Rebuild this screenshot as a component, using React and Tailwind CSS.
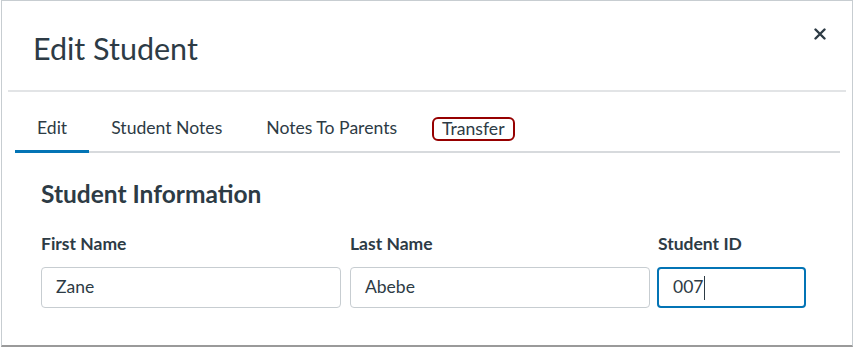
export default function App() {
  const tabs = ['Edit', 'Student Notes', 'Notes To Parents', 'Transfer'];
  return (
    <div className="w-[854px] h-[349px] bg-white" style={{ fontFamily: 'Lato, "Noto Sans", sans-serif' }}>
      <div className="ml-[1px] w-[852px] h-[347px] border border-[#c7cdd1] border-b-2 border-b-[#9a9a9a] bg-white text-[#2d3b45]">
        {/* Header */}
        <div className="relative h-[91px] mx-[6px] border-b-2 border-[#e2e4e6]">
          <h1 className="pt-[28px] pl-[25px] text-[30.5px] leading-[38px] font-normal">Edit Student</h1>
          <button className="absolute right-[18px] top-[25px] w-[16px] h-[16px] flex items-center justify-center">
            <svg width="12" height="12" viewBox="0 0 12 12">
              <path d="M1.5 1.5 L10.5 10.5 M10.5 1.5 L1.5 10.5" stroke="#2d3b45" strokeWidth="2.4" strokeLinecap="round" />
            </svg>
          </button>
        </div>
        {/* Tabs */}
        <div className="mt-[23px] ml-[13px] mr-[12px] flex h-[38px] border-b-2 border-[#d7dadd]">
          {tabs.map((t, i) => (
            <div key={t} className="relative px-[22px] text-[17.6px] leading-[26px]">
              {t === 'Transfer' ? (
                <span className="relative top-[1px] inline-block -mx-[9px] px-[8px] border-[2.5px] border-[#960000] rounded-[6px] leading-[20px]">
                  {t}
                </span>
              ) : (
                <span>{t}</span>
              )}
              {i === 0 && <div className="absolute left-0 right-0 -bottom-[2px] h-[3px] bg-[#0374b5]" />}
            </div>
          ))}
        </div>
        {/* Content */}
        <div className="pl-[39px] pt-[26px]">
          <h2 className="text-[24.5px] leading-[30px] font-bold">Student Information</h2>
          <div className="mt-[24px] flex gap-[9px]">
            <Field label="First Name" value="Zane" w="w-[300px]" />
            <Field label="Last Name" value="Abebe" w="w-[300px]" />
            <Field label="Student ID" value="007" w="w-[149px] -ml-[2px]" focus />
          </div>
        </div>
      </div>
    </div>
  );
}

function Field({ label, value, w, focus }) {
  return (
    <div className={`${w} flex flex-col`}>
      <label className={`text-[17.5px] leading-[22px] font-bold ${focus ? 'pl-[1px]' : ''}`}>{label}</label>
      <div
        className={`mt-[12px] h-[41px] rounded-[4px] flex items-center pl-[14px] text-[17.5px] ${
          focus ? 'border-2 border-[#0374b5] pl-[13px]' : 'border border-[#c7cdd1]'
        }`}
      >
        <span>{value}</span>
        {focus && <span className="ml-[1px] w-[1px] h-[24px] bg-[#2d3b45]" />}
      </div>
    </div>
  );
}
